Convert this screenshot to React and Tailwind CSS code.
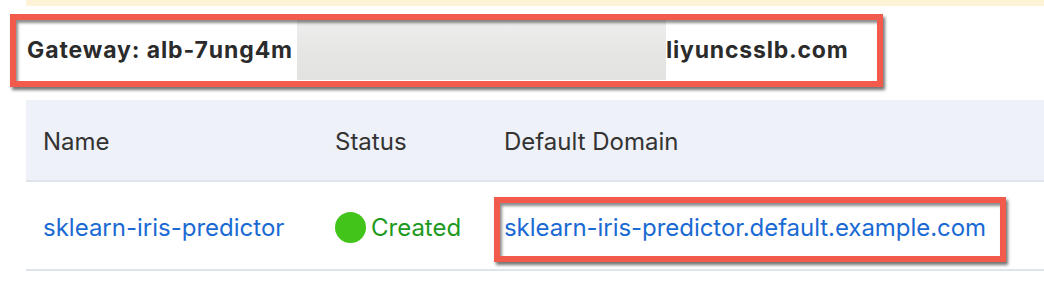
export default function App() {
  return (
    <div className="relative w-[1044px] h-[290px] overflow-hidden bg-white font-['Inter',sans-serif]">
      <div className="ml-[26px] h-[6px] bg-[#fdf4d8]" />
      <div className="mt-[14px] mb-[20px] h-[60px] flex items-center pl-[27px] text-[23px] font-bold text-[#2b2b2b]">
        <span className="w-[270px] shrink-0 whitespace-nowrap tracking-[0.9px]">Gateway: alb-7ung4m</span>
        <div className="w-[369px] h-[60px] shrink-0 bg-gradient-to-b from-[#eeeeee] via-[#e6e6e5] to-[#e2e2e1]" />
        <span className="whitespace-nowrap tracking-[0.8px]">liyuncsslb.com</span>
      </div>
      <div className="ml-[26px]">
        <div className="grid grid-cols-[292px_169px_1fr] h-[82px] pt-[3px] items-center bg-[#eef1f8] border-b-[2px] border-[#dfe3ea] text-[24px] text-[#333333]">
          <div className="pl-[17px]">Name</div>
          <div className="pl-[17px]">Status</div>
          <div className="pl-[17px]">Default Domain</div>
        </div>
        <div className="grid grid-cols-[292px_169px_1fr] h-[89px] pt-[4px] items-center border-b-[2px] border-[#dfe3ea] text-[24px]">
          <div className="pl-[17px] text-[#1a6ad4]">sklearn-iris-predictor</div>
          <div className="pl-[17px] flex items-center gap-[5px]">
            <span className="w-[31px] h-[31px] shrink-0 rounded-full bg-[#43c41a]" />
            <span className="text-[#1d9a1d]">Created</span>
          </div>
          <div className="pl-[17px] text-[#1a6ad4] tracking-[-0.05px]">sklearn-iris-predictor.default.example.com</div>
        </div>
      </div>
      <div className="absolute left-[10px] top-[14px] w-[873px] h-[73px] border-[6px] border-[#f25a4b] shadow-[2px_3px_3px_rgba(0,0,0,0.55),inset_2px_3px_3px_rgba(0,0,0,0.45)]" />
      <div className="absolute left-[494px] top-[197px] w-[512px] h-[65px] border-[6px] border-[#f25a4b] shadow-[2px_3px_3px_rgba(0,0,0,0.55),inset_2px_3px_3px_rgba(0,0,0,0.45)]" />
    </div>
  );
}
